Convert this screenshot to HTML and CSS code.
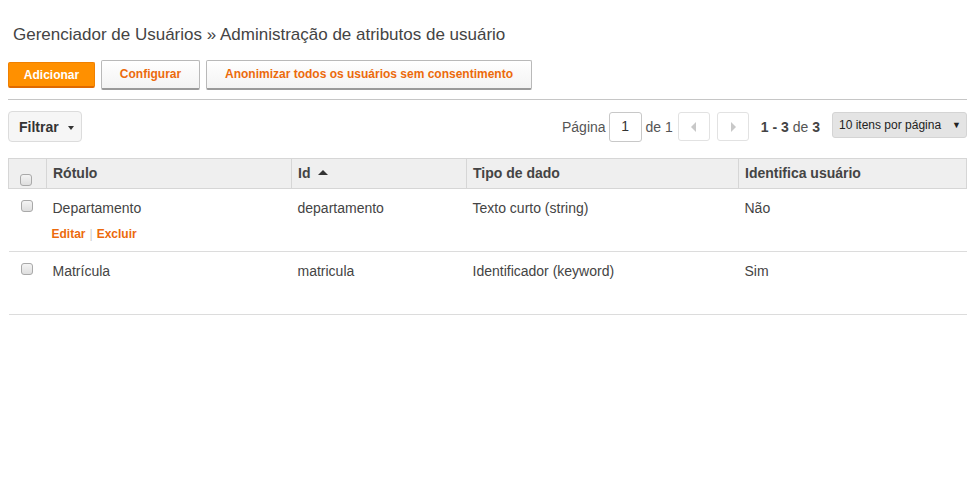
FILE: index.html
```html
<!DOCTYPE html>
<html lang="pt-BR">
<head>
<meta charset="utf-8">
<title>Administração de atributos de usuário</title>
<link rel="stylesheet" href="styles.css">
</head>
<body>
<div class="page">
  <h1 class="title">Gerenciador de Usuários » Administração de atributos de usuário</h1>
  <div class="actions">
    <button class="btn btn-primary">Adicionar</button>
    <button class="btn btn-secondary">Configurar</button>
    <button class="btn btn-secondary">Anonimizar todos os usuários sem consentimento</button>
  </div>
  <div class="toolbar">
    <button class="filter">Filtrar <span class="caret"></span></button>
    <div class="pager">
      <span class="pg-label">Página</span>
      <span class="pg-input">1</span>
      <span class="pg-label">de 1</span>
      <span class="pg-btn"><svg width="6" height="10" viewBox="0 0 6 10"><path d="M5 0 L0 5 L5 10 Z" fill="#c8c8c8"/></svg></span>
      <span class="pg-btn"><svg width="6" height="10" viewBox="0 0 6 10"><path d="M1 0 L6 5 L1 10 Z" fill="#c8c8c8"/></svg></span>
      <span class="pg-count"><b>1 - 3</b> de <b>3</b></span>
      <span class="pg-select">10 itens por página<span class="sel-arrow">▼</span></span>
    </div>
  </div>
  <table class="grid">
    <thead>
      <tr>
        <th class="col-check"><span class="check"></span></th>
        <th class="col-label">Rótulo</th>
        <th class="col-id">Id <span class="sort-up"></span></th>
        <th class="col-type">Tipo de dado</th>
        <th class="col-ident">Identifica usuário</th>
      </tr>
    </thead>
    <tbody>
      <tr>
        <td class="cell-check"><span class="check"></span></td>
        <td>Departamento
          <div class="row-links"><a>Editar</a><span class="sep">|</span><a>Excluir</a></div>
        </td>
        <td>departamento</td>
        <td>Texto curto (string)</td>
        <td>Não</td>
      </tr>
      <tr>
        <td class="cell-check"><span class="check"></span></td>
        <td>Matrícula</td>
        <td>matricula</td>
        <td>Identificador (keyword)</td>
        <td>Sim</td>
      </tr>
    </tbody>
  </table>
</div>
</body>
</html>
```

FILE: styles.css
```css
* { box-sizing: border-box; }
html, body { margin: 0; padding: 0; background: #fff; }
body {
  font-family: "Liberation Sans", Arial, sans-serif;
  color: #444;
}
.page { padding: 0 8px; }

.title {
  margin: 0;
  padding: 25px 0 0 5px;
  height: 60px;
  font-size: 17px;
  font-weight: normal;
  color: #444;
  line-height: 20px;
}

.actions {
  display: flex;
  align-items: flex-start;
  gap: 6px;
  height: 40px;
  border-bottom: 1px solid #c6c6c6;
}
.btn {
  font-family: "Liberation Sans", Arial, sans-serif;
  font-size: 12px;
  font-weight: bold;
  cursor: pointer;
  line-height: 14px;
}
.btn-primary {
  margin-top: 2px;
  height: 26px;
  width: 87px;
  padding: 0;
  background: #ff9000;
  color: #fff;
  border: 1px solid #f08000;
  border-bottom: 2px solid #e06a00;
  border-radius: 2px;
}
.btn-secondary {
  height: 30px;
  padding: 0 18px 1px;
  background: linear-gradient(#ffffff, #f3f3f3);
  color: #ec6a0c;
  border: 1px solid #b9b9b9;
  border-bottom: 2px solid #9a9a9a;
  border-radius: 2px;
}
.actions .btn-secondary:nth-child(2) { width: 99px; padding: 0 0 1px; }
.actions .btn-secondary:nth-child(3) { width: 326px; padding: 0 0 1px; }

.toolbar {
  display: flex;
  justify-content: space-between;
  align-items: flex-start;
  padding-top: 11px;
  height: 58px;
}
.filter {
  font-family: "Liberation Sans", Arial, sans-serif;
  height: 31px;
  width: 74px;
  background: #f6f6f6;
  border: 1px solid #dcdcdc;
  border-radius: 4px;
  font-size: 14px;
  font-weight: bold;
  color: #333;
  text-align: left;
  padding: 0 0 0 10px;
}
.caret {
  display: inline-block;
  width: 0; height: 0;
  margin-left: 5px;
  vertical-align: 2px;
  border-left: 3px solid transparent;
  border-right: 3px solid transparent;
  border-top: 4px solid #333;
}

.pager {
  display: flex;
  align-items: center;
  font-size: 14px;
  color: #555;
  height: 31px;
}
.pg-label { margin: 0 4px; }
.pg-label:first-child { margin-left: 0; margin-right: 3px; }
.pg-input {
  display: inline-flex;
  align-items: center;
  justify-content: center;
  width: 33px; height: 30px;
  border: 1px solid #c8c8c8;
  border-radius: 3px;
  color: #333;
  padding-bottom: 2px;
}
.pg-btn {
  display: inline-flex;
  align-items: center;
  justify-content: center;
  width: 32px; height: 29px;
  border: 1px solid #e2e2e2;
  border-radius: 3px;
  margin-left: 1px;
  margin-right: 3px;
}
.pg-btn + .pg-btn { margin-left: 4px; }
.pg-count { margin: 0 12px 0 9px; color: #555; }
.pg-count b { color: #444; }
.pg-select {
  position: relative;
  align-self: flex-start;
  margin-top: 1px;
  display: inline-flex;
  align-items: center;
  width: 135px; height: 26px;
  padding: 0 0 0 6px;
  background: #e4e4e4;
  border: 1px solid #d4d4d4;
  border-radius: 3px;
  font-size: 12px;
  color: #222;
}
.sel-arrow {
  position: absolute;
  right: 5px;
  top: 7px;
  font-size: 9px;
  color: #222;
}

.grid {
  width: 100%;
  border-collapse: collapse;
  font-size: 14px;
  color: #444;
}
.grid th {
  height: 30px;
  background: #efefef;
  border: 1px solid #d6d6d6;
  text-align: left;
  font-weight: bold;
  padding: 6px 6px 0 6px;
  vertical-align: top;
  line-height: 16px;
}
.col-check { width: 38px; }
.col-label { width: 245px; }
.col-id { width: 175px; }
.col-type { width: 272px; }
.grid th.col-check { vertical-align: bottom; padding: 0 0 2px 11px; }
.sort-up {
  display: inline-block;
  width: 0; height: 0;
  margin-left: 4px;
  vertical-align: 3px;
  border-left: 5px solid transparent;
  border-right: 5px solid transparent;
  border-bottom: 5px solid #333;
}
.grid td {
  height: 63px;
  vertical-align: top;
  padding: 11px 6px 0 6px;
  border-bottom: 1px solid #dcdcdc;
  line-height: 17px;
}
.grid td.cell-check { padding: 11px 0 0 12px; }
.check {
  display: block;
  width: 12px; height: 12px;
  border: 1px solid #a9a9a9;
  border-radius: 3px;
  background: linear-gradient(#f4f4f4, #dedede);
}
.row-links {
  margin-top: 10px;
  margin-left: -1px;
  font-size: 12px;
  font-weight: bold;
  line-height: 14px;
}
.row-links a { color: #ec6a0c; }
.row-links .sep { color: #ccc; font-weight: normal; margin: 0 4px; }
```
